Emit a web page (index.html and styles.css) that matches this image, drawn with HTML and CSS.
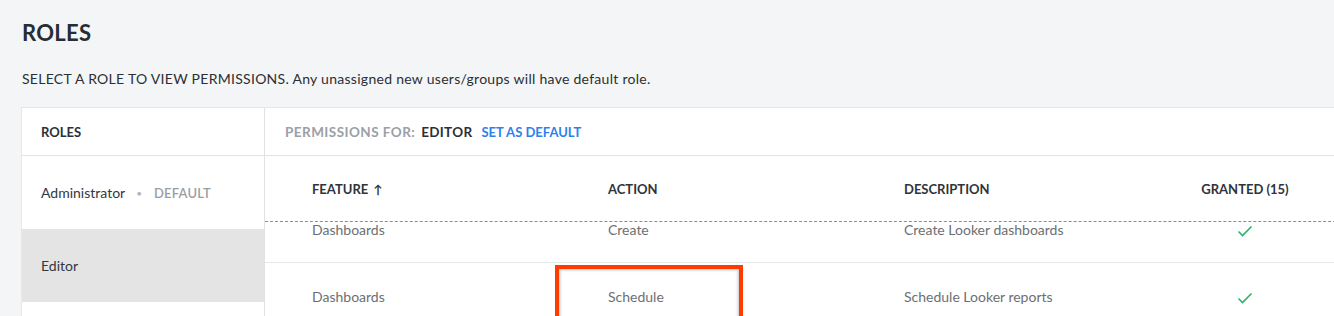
FILE: index.html
```html
<!DOCTYPE html>
<html>
<head>
<meta charset="utf-8">
<link rel="stylesheet" href="styles.css">
</head>
<body>
<div class="page">
  <h1 class="title">ROLES</h1>
  <p class="subtitle">SELECT A ROLE TO VIEW PERMISSIONS. Any unassigned new users/groups will have default role.</p>
  <div class="card">
    <div class="roles">
      <div class="roles-head">ROLES</div>
      <div class="role">Administrator <span class="dot">•</span> <span class="def">DEFAULT</span></div>
      <div class="role role-active">Editor</div>
      <div class="role"></div>
    </div>
    <div class="perms">
      <div class="perms-head">
        <span class="pf">PERMISSIONS FOR:</span>
        <span class="pname">EDITOR</span>
        <span class="setdef">SET AS DEFAULT</span>
      </div>
      <div class="thead">
        <div>FEATURE <span class="arrow">↑</span></div>
        <div>ACTION</div>
        <div>DESCRIPTION</div>
        <div class="gcol">GRANTED (15)</div>
      </div>
      <div class="tbody">
        <div class="scroll">
          <div class="trow">
            <div>Dashboards</div>
            <div>Create</div>
            <div>Create Looker dashboards</div>
            <div class="gcol"><svg class="check" viewBox="0 0 16 12" width="16" height="12"><path d="M1.5 6.5 L5.5 10.5 L14.5 1.5" fill="none" stroke="#2fb36b" stroke-width="1.6"/></svg></div>
          </div>
          <div class="trow">
            <div>Dashboards</div>
            <div>Schedule</div>
            <div>Schedule Looker reports</div>
            <div class="gcol"><svg class="check" viewBox="0 0 16 12" width="16" height="12"><path d="M1.5 6.5 L5.5 10.5 L14.5 1.5" fill="none" stroke="#2fb36b" stroke-width="1.6"/></svg></div>
          </div>
        </div>
      </div>
    </div>
    <div class="highlight"></div>
  </div>
</div>
</body>
</html>
```
FILE: styles.css
```css
html, body {
  margin: 0;
  padding: 0;
  background: #f4f5f7;
  overflow: hidden;
}
.page {
  font-family: "Lato", "Open Sans", sans-serif;
  color: #262d33;
  padding: 19px 0 0 21px;
  width: 1400px;
}
.title {
  margin: 0 0 0 1px;
  font-size: 22px;
  font-weight: 700;
  line-height: 28px;
  letter-spacing: 0.3px;
}
.subtitle {
  margin: 22px 0 0 1px;
  font-size: 14px;
  line-height: 20px;
  letter-spacing: 0.28px;
  color: #2a2f33;
}
.card {
  position: relative;
  margin-top: 18px;
  display: grid;
  grid-template-columns: 243px 1fr;
  background: #fff;
  border-top: 1px solid #e6e7e9;
  border-left: 1px solid #e6e7e9;
  height: 260px;
}
.roles {
  border-right: 1px solid #e1e2e4;
}
.roles-head {
  height: 47px;
  border-bottom: 1px solid #e1e2e4;
  display: flex;
  align-items: center;
  padding-left: 19px;
  font-size: 13px;
  font-weight: 700;
  color: #2b3036;
}
.role {
  height: 73px;
  display: flex;
  align-items: center;
  padding-left: 19px;
  font-size: 14px;
  color: #33383d;
}
.role-active {
  background: #e4e4e4;
}
.dot {
  color: #b0b3b7;
  font-size: 10px;
  margin: 0 12px 0 11px;
}
.def {
  color: #9a9ea3;
  font-size: 13px;
  font-weight: 600;
  letter-spacing: 0.2px;
}
.perms {
  display: flex;
  flex-direction: column;
  min-width: 0;
}
.perms-head {
  height: 47px;
  border-bottom: 1px solid #e1e2e4;
  display: flex;
  align-items: center;
  padding-left: 20px;
  font-size: 13.5px;
  font-weight: 700;
  gap: 6px;
}
.pf { color: #9aa0a6; letter-spacing: 0.45px; }
.pname { color: #2b3036; letter-spacing: 0.3px; }
.setdef { color: #2f80ed; margin-left: 3px; font-size: 13px; letter-spacing: 0; }
.thead, .trow {
  display: grid;
  grid-template-columns: 296px 296px 296px 90px;
  padding-left: 47px;
}
.thead {
  height: 65px;
  align-items: center;
  border-bottom: 1px dashed #8a8d91;
  font-size: 13px;
  font-weight: 700;
  color: #2f343a;
}
.arrow { font-size: 12px; margin-left: 2px; }
.gcol { text-align: center; }
.tbody {
  overflow: hidden;
  flex: 1;
}
.scroll {
  margin-top: -26px;
}
.trow {
  height: 66px;
  align-items: center;
  border-bottom: 1px solid #e6e7e9;
  font-size: 14px;
  color: #6b6f74;
}
.check { display: inline-block; vertical-align: middle; }
.highlight {
  position: absolute;
  left: 533px;
  top: 157px;
  width: 180px;
  height: 60px;
  border: 4px solid #ff3b00;
  box-shadow: inset 0 0 3px 1px rgba(0,0,0,0.25);
}
```
